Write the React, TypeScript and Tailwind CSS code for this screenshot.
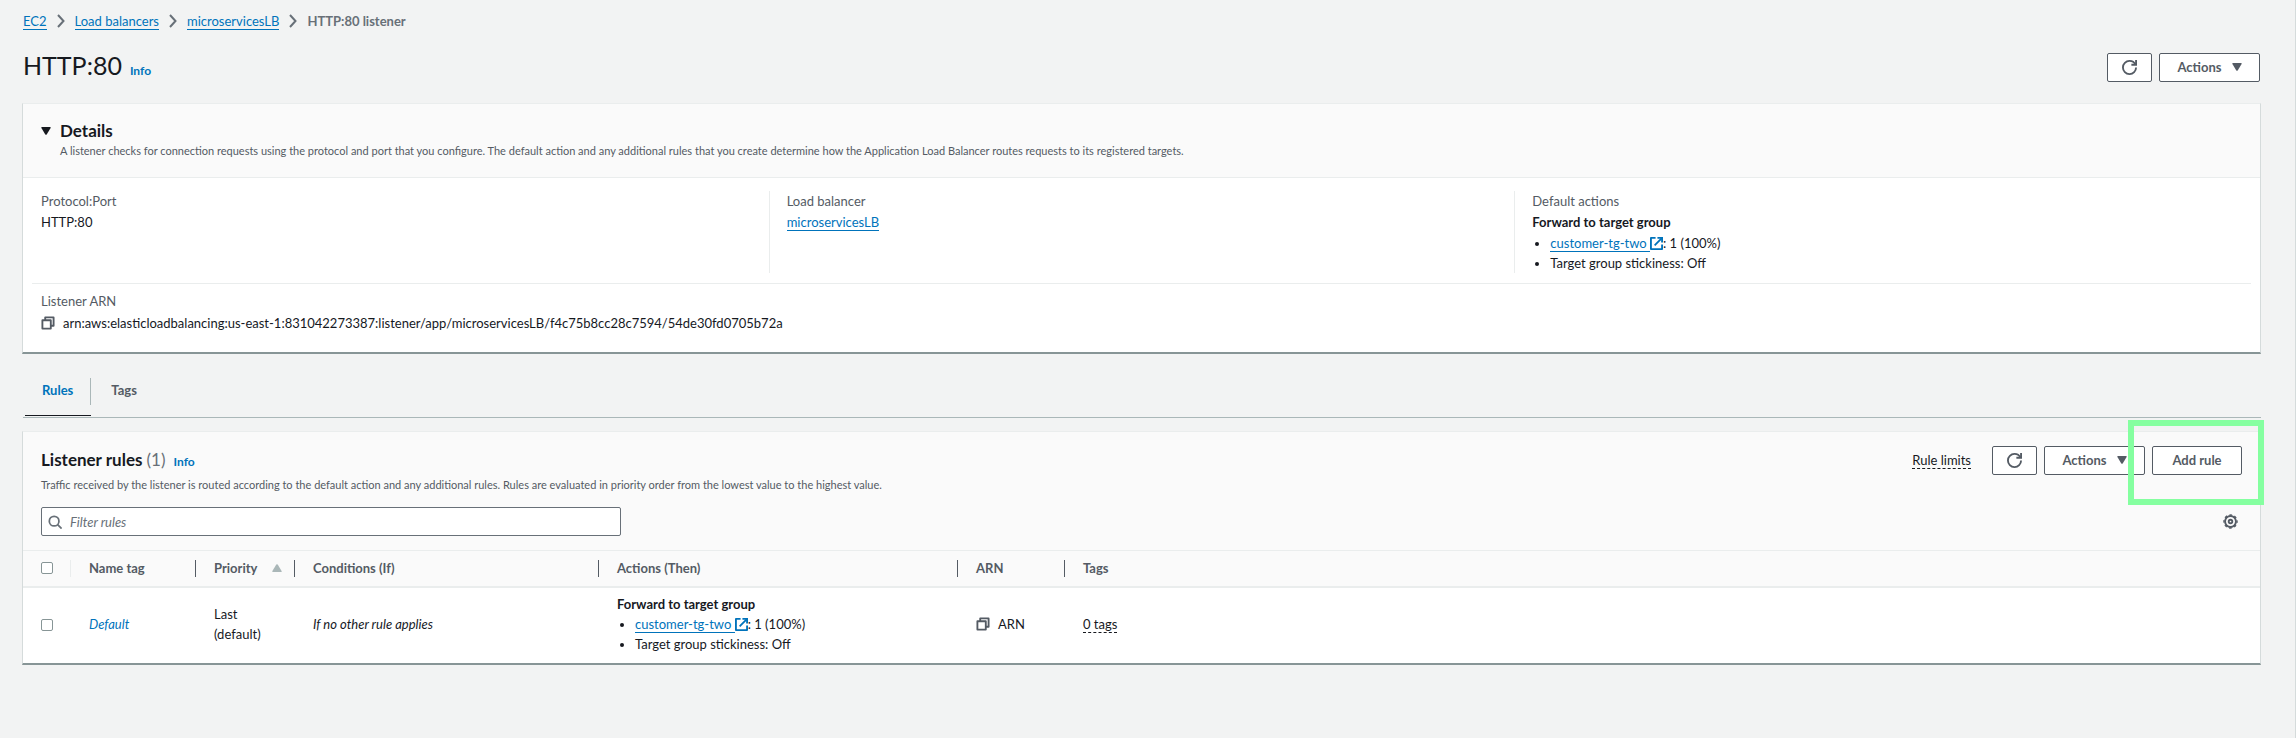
import React from "react";

type IconProps = { className?: string };

const ChevronIcon = () => (
  <svg viewBox="0 0 8 14" className="h-3.5 w-2 shrink-0" fill="none" stroke="#687078" strokeWidth="2" aria-hidden="true">
    <path d="M1 1l5.5 6L1 13" />
  </svg>
);

const CaretDown = ({ className = "" }: IconProps) => (
  <svg viewBox="0 0 10 8" className={`h-2 w-2.5 shrink-0 ${className}`} fill="currentColor" aria-hidden="true">
    <path d="M1 0h8q1.2 0 .6 1L5.7 7.4q-.7.9-1.4 0L.4 1Q-.2 0 1 0z" />
  </svg>
);

const SortIcon = () => (
  <svg viewBox="0 0 10 8" className="h-2 w-2.5 shrink-0" fill="#aab7b8" aria-hidden="true">
    <path d="M1 8h8q1.2 0 .6-1L5.7.6q-.7-.9-1.4 0L.4 7Q-.2 8 1 8z" />
  </svg>
);

const RefreshIcon = () => (
  <svg viewBox="0 0 16 16" className="size-[15px]" fill="none" stroke="currentColor" strokeWidth="2" aria-hidden="true">
    <path d="M10 5h5V0" />
    <path d="M15 8a6.957 6.957 0 0 1-7 7 6.957 6.957 0 0 1-7-7 6.957 6.957 0 0 1 7-7 6.87 6.87 0 0 1 6.3 4" />
  </svg>
);

const ExternalIcon = () => (
  <svg viewBox="1 1 14 14" className="inline size-[13px] align-[-2px]" fill="none" stroke="currentColor" strokeWidth="2" aria-hidden="true">
    <path d="M10 2h4v4" strokeLinecap="square" />
    <path d="m6 10 8-8" />
    <path d="M14 9.048V14H2V2h5" strokeLinejoin="round" />
  </svg>
);

const CopyIcon = () => (
  <svg viewBox="0.5 0.5 15 15" className="size-[14px] shrink-0" fill="none" stroke="#545b64" strokeWidth="2" strokeLinejoin="round" aria-hidden="true">
    <path d="M2 5h9v9H2z" />
    <path d="M5 5V2h9v9h-3" />
  </svg>
);

const SearchIcon = ({ className = "" }: IconProps) => (
  <svg viewBox="0 0 16 16" className={`size-3.5 ${className}`} fill="none" stroke="#687078" strokeWidth="2" aria-hidden="true">
    <circle cx="7" cy="7" r="5.5" />
    <path d="m11 11 4.5 4.5" />
  </svg>
);

const GearIcon = () => (
  <svg viewBox="0 0 16 16" className="size-[15px]" fill="none" stroke="currentColor" aria-hidden="true">
    <circle cx="8" cy="8" r="5.8" strokeWidth="2" />
    <circle cx="8" cy="8" r="7" strokeWidth="1.4" strokeDasharray="2.9 2.6" strokeDashoffset="1.45" />
    <circle cx="8" cy="8" r="1.9" strokeWidth="2" />
  </svg>
);

const btn =
  "flex h-[29px] items-center justify-center rounded-xs border border-[#545b64] bg-white pb-px text-[13px] font-bold text-[#545b64]";
const link = "border-b border-[#0073bb] text-[#0073bb]";
const card = "border border-b-2 border-[#eaeded] border-x-[#d5dbdb] border-b-[#879596] bg-white";
const checkbox = "block size-3 appearance-none rounded-xs border border-[#879596] bg-white";

function RefreshButton() {
  return (
    <button type="button" aria-label="Refresh" className={`${btn} w-[45px]`}>
      <RefreshIcon />
    </button>
  );
}

function ActionsButton() {
  return (
    <button type="button" className={`${btn} w-[101px] gap-2.5`}>
      Actions
      <CaretDown />
    </button>
  );
}

function ForwardAction() {
  return (
    <>
      <div className="font-bold">Forward to target group</div>
      <ul className="list-disc pl-[18px]">
        <li>
          <a href="#target-group" className="text-[#0073bb]">
            <span className="whitespace-pre border-b border-[#0073bb]">customer-tg-two </span>
            <ExternalIcon />
          </a>
          : 1 (100%)
        </li>
        <li>Target group stickiness: Off</li>
      </ul>
    </>
  );
}

function Field({ label, divided, children }: { label: string; divided?: boolean; children: React.ReactNode }) {
  return (
    <div className={`flex flex-col gap-px border-l pl-[17px] ${divided ? "border-[#eaeded]" : "border-transparent"}`}>
      <div className="text-[#545b64]">{label}</div>
      {children}
    </div>
  );
}

function HeaderCell({ children, last }: { children: React.ReactNode; last?: boolean }) {
  return (
    <th scope="col" className="p-0 pl-[18px] text-left">
      <div className={`flex h-[17px] items-center justify-between pr-3 ${last ? "" : "border-r border-[#545b64]"}`}>
        {children}
      </div>
    </th>
  );
}

export default function App() {
  return (
    <div className="min-h-screen border-r border-[#d5dbdb] bg-[#f2f3f3] pr-[34px] pb-6 pl-[22px] font-[Lato,'Noto_Sans',sans-serif] text-[13px] leading-5 text-[#16191f]">
      <nav aria-label="Breadcrumbs" className="pt-[11px] pl-px">
        <ol className="flex items-center gap-2.5">
          <li><a href="#ec2" className={link}>EC2</a></li>
          <li><ChevronIcon /></li>
          <li><a href="#load-balancers" className={link}>Load balancers</a></li>
          <li><ChevronIcon /></li>
          <li><a href="#microservices" className={link}>microservicesLB</a></li>
          <li><ChevronIcon /></li>
          <li className="font-bold text-[#687078]">HTTP:80 listener</li>
        </ol>
      </nav>

      <header className="mt-[22px] flex h-[29px] items-start justify-between pl-px">
        <div className="flex items-baseline gap-2">
          <h1 className="text-[25px] leading-6">HTTP:80</h1>
          <a href="#info" className="text-xs font-bold text-[#0073bb]">Info</a>
        </div>
        <div className="flex gap-[7px] pr-px">
          <RefreshButton />
          <ActionsButton />
        </div>
      </header>

      <section className={`${card} mt-[21px]`}>
        <div className="border-b border-[#eaeded] bg-[#fafafa] pt-[15px] pb-[18px] pl-[18px]">
          <h2>
            <button type="button" aria-expanded="true" className="flex items-center gap-[9px] text-[17px] leading-6 font-bold">
              <CaretDown />
              Details
            </button>
          </h2>
          <p className="pl-[19px] text-[11px] leading-4 text-[#545b64]">
            A listener checks for connection requests using the protocol and port that you configure. The default action and any additional rules that you create determine how the Application Load Balancer routes requests to its registered targets.
          </p>
        </div>
        <div className="grid grid-cols-3 pt-[13px] pb-2.5">
          <Field label="Protocol:Port">
            <div>HTTP:80</div>
          </Field>
          <Field label="Load balancer" divided>
            <div><a href="#microservices" className={link}>microservicesLB</a></div>
          </Field>
          <Field label="Default actions" divided>
            <ForwardAction />
          </Field>
        </div>
        <div className="mx-[9px] border-t border-[#eaeded] px-[9px] pt-[7px] pb-[19px]">
          <div className="text-[#545b64]">Listener ARN</div>
          <div className="mt-0.5 flex items-center gap-2">
            <button type="button" aria-label="Copy ARN"><CopyIcon /></button>
            arn:aws:elasticloadbalancing:us-east-1:831042273387:listener/app/microservicesLB/f4c75b8cc28c7594/54de30fd0705b72a
          </div>
        </div>
      </section>

      <div role="tablist" className="ml-px flex border-b border-[#aab7b8] pt-6 pl-0.5 font-bold">
        <button type="button" role="tab" aria-selected="true" className="mb-px border-b border-[#16191f] pb-2.5 text-[#0073bb]">
          <span className="flex h-[27px] items-center border-r border-[#aab7b8] px-[17px] pb-[3px]">Rules</span>
        </button>
        <button type="button" role="tab" aria-selected="false" className="mb-px border-b border-transparent pb-2.5 text-[#545b64]">
          <span className="flex h-[27px] items-center px-5 pb-[3px]">Tags</span>
        </button>
      </div>

      <section className={`${card} mt-[13px]`}>
        <div className="bg-[#fafafa] px-[18px] pt-3.5 pb-3.5">
          <div className="flex items-center justify-between">
            <div className="flex items-baseline gap-2 pb-0.5">
              <h2 className="text-[17px] font-bold">
                Listener rules <span className="font-normal text-[#687078]">(1)</span>
              </h2>
              <a href="#rules-info" className="text-xs font-bold text-[#0073bb]">Info</a>
            </div>
            <div className="flex items-center gap-[7px]">
              <button type="button" className="mr-3.5 border-b border-dashed border-[#16191f] leading-4">Rule limits</button>
              <RefreshButton />
              <ActionsButton />
              <div className="relative">
                <button type="button" className={`${btn} w-[90px]`}>Add rule</button>
                <div className="pointer-events-none absolute -top-[26px] -right-[22px] -bottom-[30px] -left-6 z-10 border-6 border-[#85ffa0]" />
              </div>
            </div>
          </div>
          <p className="mt-0.5 text-[11px] leading-4 text-[#545b64]">
            Traffic received by the listener is routed according to the default action and any additional rules. Rules are evaluated in priority order from the lowest value to the highest value.
          </p>
          <div className="mt-3.5 flex items-center justify-between">
            <div className="relative w-[580px]">
              <SearchIcon className="absolute top-2 left-[7px]" />
              <input
                type="search"
                aria-label="Filter rules"
                placeholder="Filter rules"
                className="block h-[29px] w-full rounded-xs border border-[#687078] bg-white pl-7 placeholder:text-[#687078] placeholder:italic"
              />
            </div>
            <button type="button" aria-label="Preferences" className="mr-1 text-[#545b64]"><GearIcon /></button>
          </div>
        </div>
        <table className="w-full table-fixed border-collapse">
          <colgroup>
            <col className="w-12" />
            <col className="w-[125px]" />
            <col className="w-[99px]" />
            <col className="w-[304px]" />
            <col className="w-[359px]" />
            <col className="w-[107px]" />
            <col />
          </colgroup>
          <thead className="bg-[#fafafa] text-[#545b64]">
            <tr className="h-9 border-t border-b-2 border-[#eaeded]">
              <th scope="col" className="p-0 pl-[18px]">
                <div className="flex h-[17px] items-center border-r border-[#eaeded]">
                  <input type="checkbox" aria-label="Select all rules" className={checkbox} />
                </div>
              </th>
              <HeaderCell>Name tag</HeaderCell>
              <HeaderCell>Priority <SortIcon /></HeaderCell>
              <HeaderCell>Conditions (If)</HeaderCell>
              <HeaderCell>Actions (Then)</HeaderCell>
              <HeaderCell>ARN</HeaderCell>
              <HeaderCell last>Tags</HeaderCell>
            </tr>
          </thead>
          <tbody>
            <tr>
              <td className="pl-[18px]">
                <input type="checkbox" aria-label="Select default rule" className={checkbox} />
              </td>
              <td className="pb-0.5 pl-[18px]"><a href="#default-rule" className="text-[#0073bb] italic">Default</a></td>
              <td className="px-[18px] pb-0.5">Last (default)</td>
              <td className="pb-0.5 pl-[18px] italic">If no other rule applies</td>
              <td className="pt-1.5 pb-[9px] pl-[18px]"><ForwardAction /></td>
              <td className="pb-0.5 pl-[18px]">
                <button type="button" className="flex items-center gap-2"><CopyIcon />ARN</button>
              </td>
              <td className="pb-0.5 pl-[18px]">
                <button type="button" className="border-b border-dashed border-[#16191f] leading-4">0 tags</button>
              </td>
            </tr>
          </tbody>
        </table>
      </section>
    </div>
  );
}
